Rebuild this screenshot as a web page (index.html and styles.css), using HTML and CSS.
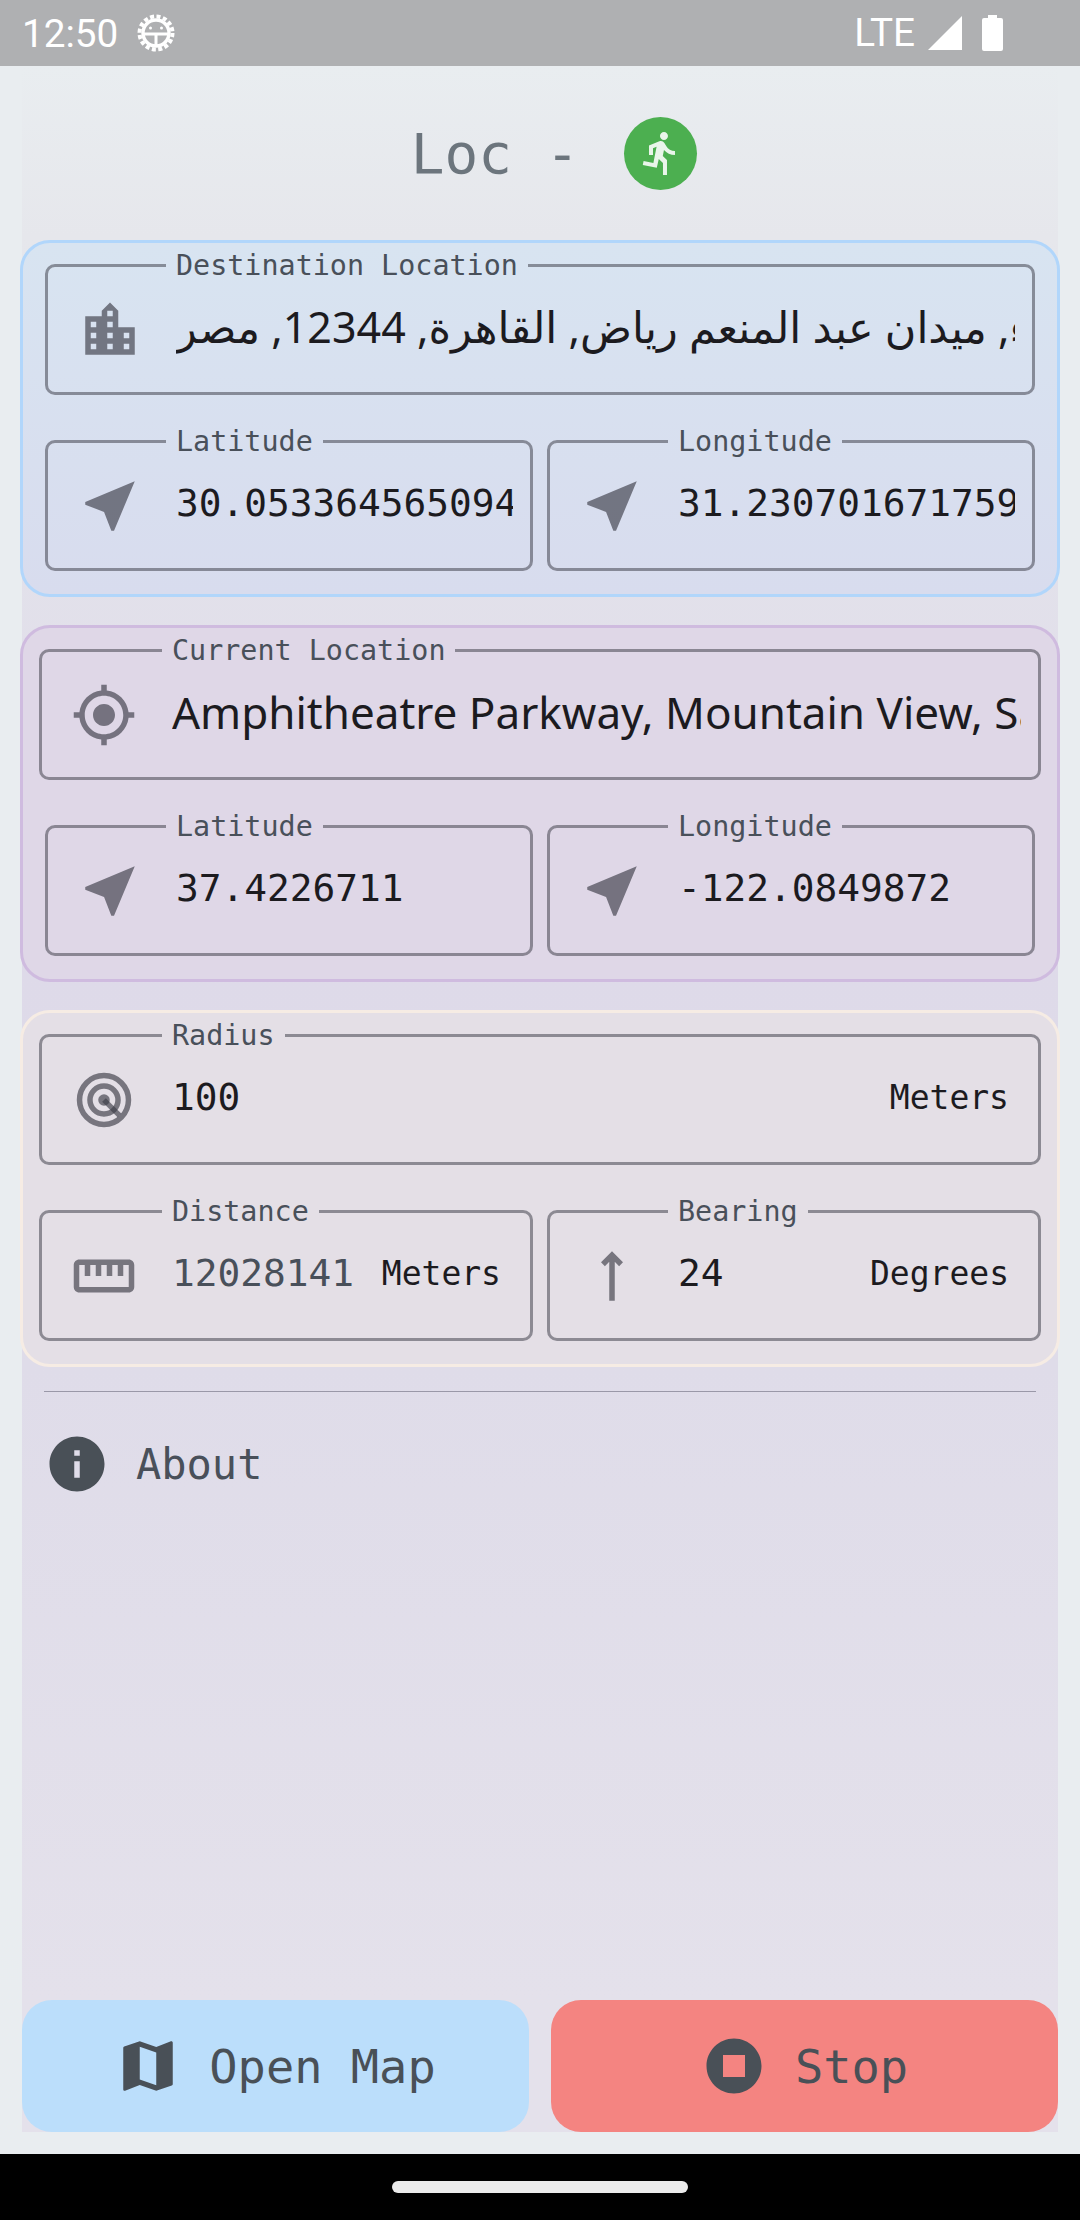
FILE: index.html
```html
<!DOCTYPE html>
<html lang="en">
<head>
  <meta charset="UTF-8">
  <title>Loc</title>
  <meta name="viewport" content="width=device-width, initial-scale=1">
  <link rel="stylesheet" href="styles.css">
</head>
<body>

  <div class="status-bar">
    <span class="clock">12:50</span>
    <svg class="debug-icon" viewBox="0 0 38 38">
      <circle cx="19" cy="19" r="16.5" fill="none" stroke="#fff" stroke-width="4" stroke-dasharray="4 2.48"/>
      <circle cx="19" cy="19" r="13" fill="none" stroke="#fff" stroke-width="3.4"/>
      <path d="M6 20h26M19 20v12" stroke="#fff" stroke-width="3" fill="none"/>
      <circle cx="13.5" cy="14" r="1.5" fill="#fff"/>
      <circle cx="24.5" cy="14" r="1.5" fill="#fff"/>
    </svg>
    <span class="spacer"></span>
    <span class="net">LTE</span>
    <svg class="signal-icon" viewBox="0 0 34 34"><path d="M34 0v34H0z" fill="#fff"/></svg>
    <svg class="battery-icon" viewBox="0 0 21 36"><path d="M6 0h9v3h4a2 2 0 0 1 2 2v29a2 2 0 0 1-2 2H2a2 2 0 0 1-2-2V5a2 2 0 0 1 2-2h4z" fill="#fff"/></svg>
  </div>

  <div class="screen">
    <main class="panel">
      <header class="title-row">
        <h1>Loc -</h1>
        <span class="status-badge">
          <svg viewBox="0 0 24 24"><path d="M13.49 5.48c1.1 0 2-.9 2-2s-.9-2-2-2-2 .9-2 2 .9 2 2 2zm-3.6 13.9l1-4.4 2.1 2v6h2v-7.5l-2.1-2 .6-3c1.3 1.5 3.3 2.5 5.5 2.5v-2c-1.9 0-3.5-1-4.3-2.4l-1-1.6c-.4-.6-1-1-1.7-1-.3 0-.5.1-.8.1l-5.2 2.2v4.7h2v-3.4l1.8-.7-1.6 8.1-4.9-1-.4 2 7 1.4z"/></svg>
        </span>
      </header>

      <section class="card card-dest">
        <fieldset class="field">
          <legend>Destination Location</legend>
          <div class="field-body">
            <svg class="icon" viewBox="0 0 24 24"><path d="M15 11V5l-3-3-3 3v2H3v14h18V11h-6zm-8 8H5v-2h2v2zm0-4H5v-2h2v2zm0-4H5V9h2v2zm6 8h-2v-2h2v2zm0-4h-2v-2h2v2zm0-4h-2V9h2v2zm0-4h-2V5h2v2zm6 12h-2v-2h2v2zm0-4h-2v-2h2v2z"/></svg>
            <span class="value value-address value-arabic">ءء, ميدان عبد المنعم رياض, القاهرة, 12344, مصر</span>
          </div>
        </fieldset>
        <div class="row">
          <fieldset class="field">
            <legend>Latitude</legend>
            <div class="field-body">
              <svg class="icon" viewBox="0 0 24 24"><path d="M21 3L3 10.53v.98l6.84 2.65L12.48 21h.98L21 3z"/></svg>
              <span class="value">30.053364565094</span>
            </div>
          </fieldset>
          <fieldset class="field">
            <legend>Longitude</legend>
            <div class="field-body">
              <svg class="icon" viewBox="0 0 24 24"><path d="M21 3L3 10.53v.98l6.84 2.65L12.48 21h.98L21 3z"/></svg>
              <span class="value">31.230701671759</span>
            </div>
          </fieldset>
        </div>
      </section>

      <section class="card card-current">
        <fieldset class="field field-wide">
          <legend>Current Location</legend>
          <div class="field-body">
            <svg class="icon" viewBox="0 0 24 24"><path d="M12 8c-2.21 0-4 1.79-4 4s1.79 4 4 4 4-1.79 4-4-1.79-4-4-4zm8.94 3c-.46-4.17-3.77-7.48-7.94-7.94V1h-2v2.06C6.83 3.52 3.52 6.83 3.06 11H1v2h2.06c.46 4.17 3.77 7.48 7.94 7.94V23h2v-2.06c4.17-.46 7.48-3.77 7.94-7.94H23v-2h-2.06zM12 19c-3.87 0-7-3.13-7-7s3.13-7 7-7 7 3.13 7 7-3.13 7-7 7z"/></svg>
            <span class="value value-address">Amphitheatre Parkway, Mountain View, San Francisco</span>
          </div>
        </fieldset>
        <div class="row">
          <fieldset class="field">
            <legend>Latitude</legend>
            <div class="field-body">
              <svg class="icon" viewBox="0 0 24 24"><path d="M21 3L3 10.53v.98l6.84 2.65L12.48 21h.98L21 3z"/></svg>
              <span class="value">37.4226711</span>
            </div>
          </fieldset>
          <fieldset class="field">
            <legend>Longitude</legend>
            <div class="field-body">
              <svg class="icon" viewBox="0 0 24 24"><path d="M21 3L3 10.53v.98l6.84 2.65L12.48 21h.98L21 3z"/></svg>
              <span class="value">-122.0849872</span>
            </div>
          </fieldset>
        </div>
      </section>

      <section class="card card-radius">
        <fieldset class="field field-wide">
          <legend>Radius</legend>
          <div class="field-body">
            <svg class="icon" viewBox="0 0 24 24">
              <circle cx="12" cy="12" r="8.9" fill="none" stroke-width="2"/>
              <circle cx="12" cy="12" r="5.1" fill="none" stroke-width="2"/>
              <circle cx="12" cy="12" r="2.1"/>
              <path d="M12 12l5.6 5.6" fill="none" stroke-width="1.9"/>
            </svg>
            <span class="value">100</span>
            <span class="unit">Meters</span>
          </div>
        </fieldset>
        <div class="row">
          <fieldset class="field field-left">
            <legend>Distance</legend>
            <div class="field-body">
              <svg class="icon" viewBox="0 0 24 24"><path d="M21 6H3c-1.1 0-2 .9-2 2v8c0 1.1.9 2 2 2h18c1.1 0 2-.9 2-2V8c0-1.1-.9-2-2-2zm0 10H3V8h2v4h2V8h2v4h2V8h2v4h2V8h2v4h2V8h2v8z"/></svg>
              <span class="value value-muted">12028141</span>
              <span class="unit">Meters</span>
            </div>
          </fieldset>
          <fieldset class="field field-right">
            <legend>Bearing</legend>
            <div class="field-body">
              <svg class="icon" viewBox="0 0 24 24"><path d="M11 6.83L9.41 8.41 8 7l4-4 4 4-1.41 1.41L13 6.83V21h-2V6.83z"/></svg>
              <span class="value">24</span>
              <span class="unit">Degrees</span>
            </div>
          </fieldset>
        </div>
      </section>

      <hr class="divider">

      <div class="about">
        <svg class="icon" viewBox="0 0 24 24"><path d="M12 2C6.48 2 2 6.48 2 12s4.48 10 10 10 10-4.48 10-10S17.52 2 12 2zm1 15h-2v-6h2v6zm0-8h-2V7h2v2z"/></svg>
        <span>About</span>
      </div>

      <div class="actions">
        <button class="btn btn-map">
          <svg class="icon" viewBox="0 0 24 24"><path d="M20.5 3l-.16.03L15 5.1 9 3 3.36 4.9c-.21.07-.36.25-.36.48V20.5c0 .28.22.5.5.5l.16-.03L9 18.9l6 2.1 5.64-1.9c.21-.07.36-.25.36-.48V3.5c0-.28-.22-.5-.5-.5zM15 19l-6-2.11V5l6 2.11V19z"/></svg>
          Open Map
        </button>
        <button class="btn btn-stop">
          <svg class="icon" viewBox="0 0 24 24"><path d="M12 2C6.48 2 2 6.48 2 12s4.48 10 10 10 10-4.48 10-10S17.52 2 12 2zm4 14H8V8h8v8z"/></svg>
          Stop
        </button>
      </div>
    </main>
  </div>

  <div class="nav-bar"><span class="nav-handle"></span></div>

</body>
</html>
```

FILE: styles.css
```css
:root {
  --page: #e9edf0;
  --label: #49505a;
  --ink: #1c1b1f;
  --mono: "DejaVu Sans Mono", "Liberation Mono", monospace;
}

* { box-sizing: border-box; }

html, body {
  height: 100%;
}

body {
  margin: 0;
  display: flex;
  flex-direction: column;
  background: var(--page);
  font-family: var(--mono);
  color: var(--ink);
}

/* android chrome */
.status-bar {
  height: 66px;
  flex: none;
  display: flex;
  align-items: center;
  padding: 0 77px 0 22px;
  background: #afb0b2;
  color: #fff;
  font-family: Roboto, sans-serif;
  font-size: 38.7px;
}

.debug-icon {
  width: 38px;
  height: 38px;
  margin-left: 19px;
}

.spacer { flex: 1; }

.net { margin-top: -2px; }

.signal-icon {
  width: 34px;
  height: 34px;
  margin-left: 13px;
}

.battery-icon {
  width: 21px;
  height: 36px;
  margin-left: 20px;
}

.nav-bar {
  height: 66px;
  flex: none;
  display: flex;
  justify-content: center;
  padding-top: 27px;
  background: #000;
}

.nav-handle {
  width: 296px;
  height: 12px;
  border-radius: 6px;
  background: #ebebeb;
}

/* screen */
.screen {
  flex: 1;
  display: flex;
  padding: 0 22px 22px;
  min-height: 0;
  min-width: 0;
}

.panel {
  flex: 1;
  min-width: 0;
  display: flex;
  flex-direction: column;
  background: linear-gradient(#e9edf0 0, #e6e7ec 170px, #dedae9 900px, #dfdce9 1300px, #e4e1eb 1934px);
}

.title-row {
  height: 174px;
  flex: none;
  display: flex;
  align-items: center;
  justify-content: center;
  gap: 45px;
  padding-left: 28px;
}

h1 {
  margin: 0;
  font-size: 56px;
  font-weight: 400;
  color: #6c757d;
}

.status-badge {
  width: 73px;
  height: 73px;
  display: flex;
  align-items: center;
  justify-content: center;
  border-radius: 50%;
  background: #4caf50;
}

.status-badge svg {
  width: 48px;
  height: 48px;
  fill: #e9f5ea;
}

.card {
  flex: none;
  margin: 0 -2px 28px;
  padding: 5px 22px 23px;
  display: flex;
  flex-direction: column;
  gap: 29px;
  border: 3px solid;
  border-radius: 30px;
}

.card-dest {
  border-color: #b1d6fb;
  background: linear-gradient(#d8e4f1, #d8dcee);
}

.card-current {
  border-color: #cfbbdf;
  background: #dfd7e7;
}

.card-radius {
  border-color: #f6ece4;
  background: #e4dfe6;
}

.row {
  display: flex;
  gap: 14px;
}

.row .field {
  flex: 1;
}

.field {
  height: 147px;
  margin: 0;
  padding: 0 17px 0 29px;
  min-width: 0;
  min-inline-size: 0;
  border: 3px solid rgba(60, 60, 70, 0.52);
  border-radius: 10px;
}

legend {
  margin-left: 89px;
  padding: 0 10px;
  height: 34px;
  font-size: 28.4px;
  line-height: 36px;
  color: var(--label);
}

/* the legend pushes content down, pull it back so it centres on the outline */
.field-body {
  display: flex;
  align-items: center;
  height: 124px;
  margin-top: -14px;
}

.icon {
  flex: none;
  width: 66px;
  height: 66px;
  margin-right: 33px;
  fill: rgba(60, 60, 70, 0.65);
  stroke: rgba(60, 60, 70, 0.65);
  stroke-width: 0;
}

.value {
  flex: 1;
  min-width: 0;
  white-space: nowrap;
  overflow: hidden;
  font-size: 37.8px;
  line-height: 60px;
  margin-top: -6px;
}

.value-address {
  font-family: "Noto Sans", "DejaVu Sans", sans-serif;
  font-size: 44px;
}

.value-arabic {
  font-size: 43px;
}

.value-muted {
  color: var(--label);
}

.unit {
  flex: none;
  margin: -6px 12px 0 10px;
  font-size: 33px;
}

/* wide rows stick out a little past the others */
.field-wide {
  margin: 0 -6px;
}

.field-left { margin-left: -6px; }
.field-right { margin-right: -6px; }

.field-wide legend,
.field-left legend {
  margin-left: 91px;
}

.field-wide .icon,
.field-left .icon {
  margin-right: 35px;
}

.divider {
  width: 992px;
  height: 1px;
  margin: -4px auto 0;
  border: none;
  background: #9a98a8;
  flex: none;
}

.about {
  margin: 39px 0 0 22px;
  display: flex;
  align-items: center;
  font-size: 42px;
  color: var(--label);
}

.about .icon {
  margin-right: 26px;
  fill: #495057;
  stroke: none;
}

.actions {
  margin-top: auto;
  display: flex;
  gap: 22px;
}

.btn {
  flex: 1;
  height: 132px;
  display: flex;
  align-items: center;
  justify-content: center;
  gap: 28px;
  border: none;
  border-radius: 30px;
  font-family: var(--mono);
  font-size: 47px;
  color: #495057;
}

.btn .icon {
  margin: 0;
  fill: #495057;
  stroke: none;
}

.btn-map { background: #bbdefb; }
.btn-stop { background: #f48481; }
```
